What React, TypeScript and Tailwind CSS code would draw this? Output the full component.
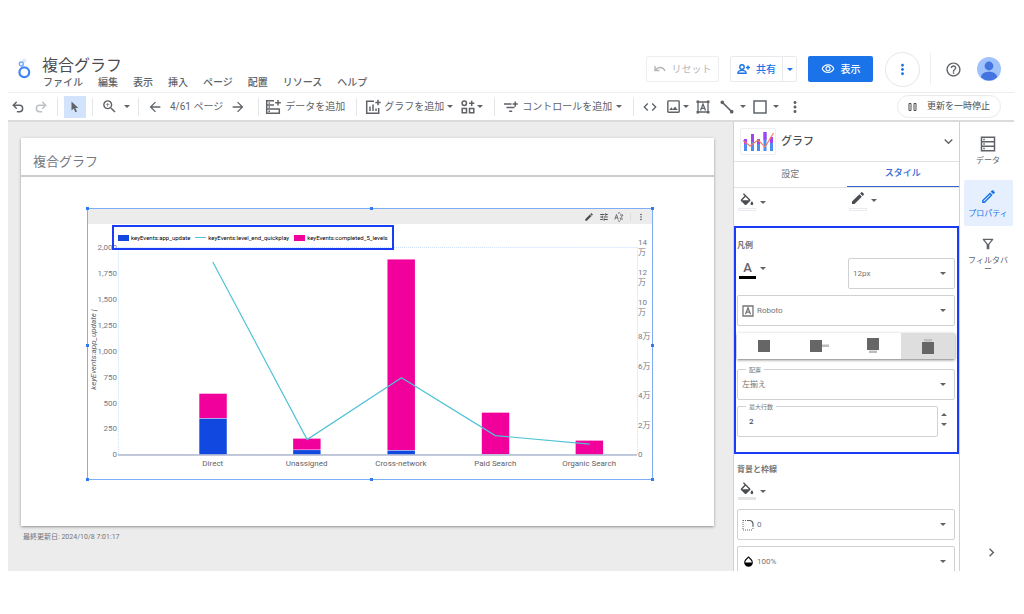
import React from 'react';
import { Undo2, Redo2 } from 'lucide-react';
import {
  MdZoomIn,
  MdArrowBack,
  MdArrowForward,
  MdCode,
  MdOutlineImage,
  MdMoreVert,
  MdHelpOutline,
  MdOutlineVisibility,
  MdEdit,
  MdOutlineEdit,
  MdTune,
  MdChevronRight,
  MdKeyboardArrowDown,
  MdOutlineFilterAlt,
  MdOpacity,
} from 'react-icons/md';

const menus = ['ファイル', '編集', '表示', '挿入', 'ページ', '配置', 'リソース', 'ヘルプ'];

const Caret: React.FC<{ className?: string }> = ({ className = 'fill-[#5f6368]' }) => (
  <svg viewBox="0 0 6 3" className={`h-[3px] w-[6px] shrink-0 ${className}`}>
    <path d="M0 0h6L3 3z" />
  </svg>
);

const Logo = () => (
  <svg viewBox="0 0 14 22" className="h-[22px] w-[14px] shrink-0" fill="none">
    <circle cx="6.300" cy="14.300" r="4.900" stroke="#4285f4" strokeWidth="2.200" />
    <circle cx="3.300" cy="6" r="2" stroke="#6ea2f8" strokeWidth="1.300" />
    <circle cx="6.300" cy="2.700" r="1.300" stroke="#bdd4fb" strokeWidth="1" />
  </svg>
);

const Avatar = () => (
  <svg viewBox="0 0 24 24" className="size-6">
    <circle cx="12" cy="12" r="12" fill="#a0c2fb" />
    <circle cx="12" cy="9" r="4.400" fill="#4374e0" />
    <path d="M4 20.500c0-4 4-5.700 8-5.700s8 1.700 8 5.700a12 12 0 0 1-16 0z" fill="#4374e0" />
  </svg>
);

const CursorIcon = () => (
  <svg viewBox="0 0 10 12" className="h-[12px] w-[10px] fill-[#5f6368]">
    <path d="M1.500.5v9l2.200-2 1.700 3.800 1.600-.7-1.700-3.700h3z" />
  </svg>
);

const PersonAddIcon = () => (
  <svg viewBox="0 0 14 12" className="h-3 w-[14px]" fill="none" stroke="currentColor" strokeWidth="1.400">
    <circle cx="5" cy="4" r="2.200" />
    <path d="M1 10.300v-.8c0-1.500 2.600-2.200 4-2.200s4 .7 4 2.200v.8zM11 2.500v4M9 4.500h4" />
  </svg>
);

const DataAddIcon = () => (
  <svg viewBox="0 0 16 16" className="size-4" fill="none" stroke="currentColor" strokeWidth="1.500">
    <path d="M9 1.700H1.700v12.600h12.600V9.500M1.700 6H9M1.700 10h12.600M3.500 4h1.500M3.500 8h1.500M3.500 12.200h1.500M13 1v5.500M10.200 3.700h5.600" />
  </svg>
);

const ChartAddIcon = () => (
  <svg viewBox="0 0 16 16" className="size-4" fill="none" stroke="currentColor" strokeWidth="1.500">
    <path d="M9 2.200H1.700v12h12V9M5 12V7.500M8 12V5.500M11 12V9.500M13 .8v5.400M10.300 3.500h5.400" />
  </svg>
);

const WidgetsIcon = () => (
  <svg viewBox="0 0 14 14" className="size-[14px]" fill="none" stroke="currentColor" strokeWidth="1.500">
    <circle cx="3.300" cy="3.300" r="2.200" />
    <path d="M1.200 8.500h4.300v4.300H1.200zM8.500 8.500h4.300v4.300H8.500zM10.700.7v5.200M8.100 3.300h5.200" />
  </svg>
);

const ControlIcon = () => (
  <svg viewBox="0 0 14 12" className="h-3 w-[14px]" fill="none" stroke="currentColor" strokeWidth="1.500">
    <path d="M0 3h7.500M2.500 6.500h8M5.200 10.300h3M11.200.5v5.200M8.600 3h5.200" />
  </svg>
);

const TextBoxIcon = () => (
  <svg viewBox="0 0 14 14" className="size-[14px]" fill="none" stroke="currentColor" strokeWidth="1.300">
    <path d="M2 2h10v10H2z" />
    <path d="M4.500 10.500 7 4l2.500 6.500M5.400 8.300h3.200" />
    <path d="M.5.5h2.600v2.600H.5zM10.900.5h2.600v2.600h-2.600zM.5 10.900h2.600v2.600H.5zM10.900 10.900h2.600v2.600h-2.600z" fill="currentColor" stroke="none" />
  </svg>
);

const LineIcon = () => (
  <svg viewBox="0 0 14 14" className="size-[14px]" fill="currentColor" stroke="currentColor" strokeWidth="1.700">
    <path d="M2 2l10 10" />
    <circle cx="2.300" cy="2.300" r="1" />
    <circle cx="11.700" cy="11.700" r="1" />
  </svg>
);

const FillIcon = () => (
  <svg viewBox="2 0 20 18" className="h-[13px] w-[14px] fill-[#4a4d51]">
    <path d="M16.560 8.940 7.620 0 6.210 1.410l2.380 2.380-5.150 5.150c-.59.59-.59 1.540 0 2.120l5.500 5.500c.29.29.68.44 1.060.44s.77-.15 1.060-.44l5.500-5.500c.59-.58.59-1.530 0-2.120zM5.210 10 10 5.210 14.790 10H5.210zM19 11.500s-2 2.170-2 3.500c0 1.100.9 2 2 2s2-.9 2-2c0-1.330-2-3.500-2-3.500z" />
  </svg>
);

const ComboChartIcon = () => (
  <svg viewBox="0 0 32 22" className="h-[22px] w-8" fill="none">
    <path d="M3.500 8v12M10.500 3v17M16.500 8v12M23 1v19M29.500 6v14" stroke="#4d8bf5" strokeWidth="3" />
    <path d="M3.500 8v5M10.500 3v8M16.500 8v5M23 1v8M29.500 6v6" stroke="#a142f4" strokeWidth="3" />
    <path d="M1 9.500 8 15l8-6 7 7L31.500 2" stroke="#fa7b5f" strokeWidth="1.200" />
  </svg>
);

const DataRailIcon = () => (
  <svg viewBox="0 0 16 16" className="size-4" fill="none" stroke="currentColor" strokeWidth="1.500">
    <path d="M1.500 1.200h13v13.600h-13zM1.500 5.700h13M1.500 10.200h13M3.300 3.500h1.500M3.300 8h1.500M3.300 12.500h1.500" />
  </svg>
);

const CornerIcon = () => (
  <svg viewBox="0 0 12 12" className="size-3" fill="none" stroke="#5f6368">
    <path d="M1 1.500h5M1 1v10M1 11h10M11 7v4" strokeDasharray="1 1" />
    <path d="M5 1.500h2.500a3.500 3.500 0 0 1 3.500 3.500v2" strokeWidth="1.200" />
  </svg>
);

const FontIcon = () => (
  <svg viewBox="0 0 12 12" className="size-3" fill="none" stroke="#757575" strokeWidth="1.300">
    <path d="M1 1h10v10H1z" />
    <path d="M3.500 9.200 6 2.800l2.500 6.400M4.300 7.200h3.400" />
  </svg>
);

const SortIcon = () => (
  <svg viewBox="0 0 10 10" className="size-[10px]" fill="none" stroke="#5f6368">
    <path d="M.8 7.500 2.500 2.500l1.700 5M1.400 5.800h2.300M6 3h3L6 7h3M4 1.500 5.200.5l1.200 1M4 8.500l1.200 1 1.200-1" strokeWidth=".9" />
  </svg>
);

const ToolGroup: React.FC<{ className?: string; children: React.ReactNode }> = ({ className = '', children }) => (
  <div className={`flex h-[18px] shrink-0 items-center border-r border-[#e4e6e8] ${className}`}>{children}</div>
);

const ToolButton: React.FC<{ label: string; className?: string; children: React.ReactNode }> = ({
  label,
  className = '',
  children,
}) => (
  <button type="button" aria-label={label} className={`flex shrink-0 items-center whitespace-nowrap ${className}`}>
    {children}
  </button>
);

const Header = () => (
  <header className="flex h-[46px] shrink-0 items-center pr-[13px]">
    <div className="flex flex-1 items-center gap-[10px] pl-[10px]">
      <Logo />
      <div className="pt-[9px]">
        <h1 className="text-base leading-[18px] text-[#4a4d51]">複合グラフ</h1>
        <nav className="flex gap-[15px] pl-px text-[10px] leading-4 font-medium text-[#5f6368]">
          {menus.map(menu => (
            <button key={menu} type="button">
              {menu}
            </button>
          ))}
        </nav>
      </div>
    </div>

    <button
      type="button"
      disabled
      className="mr-[11px] flex h-[26px] w-[73px] items-center justify-center gap-[6px] rounded-xs border border-[#eeeeee] text-[10px] text-[#b4b6b9]"
    >
      <svg viewBox="0 0 12 8" className="h-2 w-3" fill="none" stroke="currentColor" strokeWidth="1.400">
        <path d="M1 1v4.500h4.500M1.500 5C4 1.500 9 1.500 11 6" />
      </svg>
      リセット
    </button>
    <div className="mr-[11px] flex h-[26px] w-[67px] rounded-xs border border-[#e8eaed] text-[#1a73e8]">
      <button type="button" className="flex flex-1 items-center justify-center gap-[5px] text-[10px] font-medium">
        <PersonAddIcon />
        共有
      </button>
      <button
        type="button"
        aria-label="共有オプション"
        className="flex w-[14px] items-center justify-center border-l border-[#e8eaed]"
      >
        <Caret className="fill-[#1a73e8]" />
      </button>
    </div>
    <button
      type="button"
      className="mr-3 flex h-[26px] w-[65px] items-center justify-center gap-[6px] rounded-xs bg-[#1a73e8] text-[10px] font-medium text-white"
    >
      <MdOutlineVisibility size={14} />
      表示
    </button>
    <button
      type="button"
      aria-label="その他"
      className="mr-[10px] flex size-[35px] items-center justify-center rounded-full border border-[#e4e6e8] text-[#1a73e8]"
    >
      <MdMoreVert size={17} />
    </button>
    <div className="mr-[14px] h-8 border-l border-[#eceef0]" />
    <button type="button" aria-label="ヘルプを表示" className="mr-[15px] text-[#5f6368]">
      <MdHelpOutline size={17} />
    </button>
    <button type="button" aria-label="アカウント">
      <Avatar />
    </button>
  </header>
);

const Toolbar = () => (
  <div className="flex h-[30px] shrink-0 items-center border-t border-b-2 border-t-[#eceef0] border-b-[#d9dbdd] pr-[13px] text-[10px] text-[#5f6368]">
    <ToolGroup className="gap-[9px] pr-[9px] pl-[3px]">
      <ToolButton label="元に戻す">
        <Undo2 size={14} strokeWidth={2.500} />
      </ToolButton>
      <ToolButton label="やり直す" className="text-[#bdc1c6]">
        <Redo2 size={14} strokeWidth={2.500} />
      </ToolButton>
    </ToolGroup>
    <ToolGroup className="px-[6px]">
      <ToolButton label="選択" className="h-[22px] w-[22px] justify-center bg-[#d2e3fc]">
        <CursorIcon />
      </ToolButton>
    </ToolGroup>
    <ToolGroup className="px-2">
      <ToolButton label="ズーム" className="gap-[6px]">
        <MdZoomIn size={17} />
        <Caret />
      </ToolButton>
    </ToolGroup>
    <ToolGroup className="gap-[7px] pr-3 pl-2">
      <ToolButton label="前のページ">
        <MdArrowBack size={16} />
      </ToolButton>
      <span className="whitespace-nowrap">4/61 ページ</span>
      <ToolButton label="次のページ">
        <MdArrowForward size={16} />
      </ToolButton>
    </ToolGroup>
    <ToolGroup className="pr-[11px] pl-[6px]">
      <ToolButton label="データを追加" className="gap-1">
        <DataAddIcon />
        データを追加
      </ToolButton>
    </ToolGroup>
    <ToolGroup className="gap-2 pr-[11px] pl-2">
      <ToolButton label="グラフを追加" className="gap-[3px]">
        <ChartAddIcon />
        グラフを追加
        <Caret />
      </ToolButton>
      <ToolButton label="コミュニティ ビジュアライゼーション" className="gap-[2px]">
        <WidgetsIcon />
        <Caret />
      </ToolButton>
    </ToolGroup>
    <ToolGroup className="pr-[11px] pl-[9px]">
      <ToolButton label="コントロールを追加" className="gap-1">
        <ControlIcon />
        コントロールを追加
        <Caret />
      </ToolButton>
    </ToolGroup>
    <div className="flex items-center gap-[7px] pl-2">
      <ToolButton label="URL を埋め込む">
        <MdCode size={16} />
      </ToolButton>
      <ToolButton label="画像" className="gap-px">
        <MdOutlineImage size={17} />
        <Caret />
      </ToolButton>
      <ToolButton label="テキスト">
        <TextBoxIcon />
      </ToolButton>
      <ToolButton label="線" className="gap-[6px] pl-[3px]">
        <LineIcon />
        <Caret />
      </ToolButton>
      <ToolButton label="図形" className="gap-[6px]">
        <svg viewBox="0 0 14 14" className="size-[14px]" fill="none" stroke="currentColor" strokeWidth="1.500">
          <path d="M1 1h12v12H1z" />
        </svg>
        <Caret />
      </ToolButton>
      <ToolButton label="その他のツール">
        <MdMoreVert size={18} />
      </ToolButton>
    </div>
    <button
      type="button"
      className="ml-auto flex h-[23px] w-[104px] items-center justify-center gap-[10px] rounded-full border border-[#e8eaed] text-[9px] whitespace-nowrap text-[#4a4d51]"
    >
      <svg viewBox="0 0 9 8" className="h-2 w-[9px]" fill="none" stroke="currentColor">
        <path d="M1 .5h2v7H1zM6 .5h2v7H6z" />
      </svg>
      更新を一時停止
    </button>
  </div>
);

const leftTicks = ['2,000', '1,750', '1,500', '1,250', '1,000', '750', '500', '250', '0'];
const rightTicks = ['14万', '12万', '10万', '8万', '6万', '4万', '2万', '0'];
const bars = [
  { name: 'Direct', x: 125, top: 170, split: 194.500 },
  { name: 'Unassigned', x: 219, top: 215, split: 226 },
  { name: 'Cross-network', x: 313.500, top: 35.500, split: 226.500 },
  { name: 'Paid Search', x: 408, top: 189, split: 230.500 },
  { name: 'Organic Search', x: 502, top: 217, split: 231 },
];

// Plot area: x 30-550, y 24-231, zero line at y 231
const ComboChart = () => (
  <svg viewBox="0 0 565 255" className="block w-full font-['Roboto','Noto_Sans_CJK_JP',sans-serif]">
    <rect x="30.500" y="23.500" width="520" height="207.500" fill="none" stroke="#c9dcfa" strokeDasharray="1 1" />
    {leftTicks.map((tick, i) => (
      <text key={tick} x="29" y={26.500 + i * 25.900} textAnchor="end" fontSize="8" fill="#757984">
        {tick}
      </text>
    ))}
    {rightTicks.map((tick, i) => {
      const y = 26.500 + i * 29.600;
      return tick.length === 3 ? (
        <text key={tick} fontSize="8" fill="#757984">
          <tspan x="551" y={y - 5}>{tick.slice(0, 2)}</tspan>
          <tspan x="551" y={y + 5}>{tick.slice(2)}</tspan>
        </text>
      ) : (
        <text key={tick} x="551" y={y} fontSize="8" fill="#757984">
          {tick}
        </text>
      );
    })}
    <text transform="translate(8 166) rotate(-90)" fontSize="8" fontStyle="italic" fill="#5f6368">
      keyEvents:app_update |
    </text>
    {bars.map(bar => (
      <g key={bar.name}>
        <rect x={bar.x - 13.500} y={bar.top} width="27.500" height={bar.split - bar.top} fill="#f2009b" />
        <rect x={bar.x - 13.500} y={bar.split + 0.500} width="27.500" height={Math.max(0, 230.500 - bar.split)} fill="#1149e0" />
        <text x={bar.x} y="242.500" textAnchor="middle" fontSize="8" fill="#5f6368">
          {bar.name}
        </text>
      </g>
    ))}
    <path d="M30 231.500h520" stroke="#b0b9cf" strokeWidth="1.500" />
    <path d="M125 38 219.500 216 314 154 408 212 502.500 220.500" fill="none" stroke="#4fc3d4" strokeWidth="1.200" />
  </svg>
);

const Legend = () => (
  <div className="absolute top-4 left-6 flex h-[25px] items-center gap-[5px] border-2 border-[#1a3cf5] px-[4px] font-['Roboto',sans-serif] text-[6px] whitespace-nowrap text-black">
    <span className="flex items-center gap-[2px]">
      <i className="h-[6px] w-[11px] bg-[#1149e0]" />
      keyEvents:app_update
    </span>
    <span className="flex items-center gap-[2px]">
      <i className="h-px w-[11px] bg-[#4fc3d4]" />
      keyEvents:level_end_quickplay
    </span>
    <span className="flex items-center gap-[2px]">
      <i className="h-[6px] w-[11px] bg-[#f2009b]" />
      keyEvents:completed_5_levels
    </span>
  </div>
);

const handles = [
  '-top-[2px] -left-[2px]',
  '-top-[2px] left-1/2',
  '-top-[2px] -right-[2px]',
  'top-1/2 -left-[2px]',
  'top-1/2 -right-[2px]',
  '-bottom-[2px] -left-[2px]',
  '-bottom-[2px] left-1/2',
  '-bottom-[2px] -right-[2px]',
];

const Canvas = () => (
  <main className="flex-1 overflow-hidden bg-[#ececec] pt-4 pr-[19px] pl-[13px]">
    <section className="bg-white pb-[46px] shadow-sm shadow-black/30">
      <h2 className="border-b-2 border-[#cccccc] pt-[10px] pl-3 text-[13px] leading-[27px] text-[#757984]">複合グラフ</h2>
      <div className="relative mt-[31px] mr-[61px] ml-[66px] border border-[#7fadf5]">
        <div className="flex h-[15px] items-center justify-end gap-[5px] bg-[#ececec] pr-[6px] text-[#4a4d51]">
          <MdEdit size={10} />
          <MdTune size={10} />
          <SortIcon />
          <div className="ml-px h-2 border-l border-[#dadce0]" />
          <MdMoreVert size={10} />
        </div>
        <ComboChart />
        <Legend />
        {handles.map(position => (
          <div key={position} className={`absolute size-[3px] bg-[#2f7af0] ${position}`} />
        ))}
      </div>
    </section>
    <p className="pt-[5px] pl-[2px] text-[7px] leading-3 text-[#757575]">最終更新日: 2024/10/8 7:01:17</p>
  </main>
);

interface FieldProps {
  label: string;
  value: string;
  icon?: React.ReactNode;
  floating?: boolean;
  className?: string;
}

const SelectField: React.FC<FieldProps> = ({ label, value, icon, floating = false, className = '' }) => (
  <label className={`relative flex h-[31px] shrink-0 items-center rounded-xs border border-[#cfd1d3] ${className}`}>
    {floating && (
      <span className="absolute -top-[5px] left-[8px] bg-white px-[3px] text-[6px] leading-[10px] text-[#757575]">{label}</span>
    )}
    {icon && <span className="absolute left-1">{icon}</span>}
    <select
      aria-label={label}
      className={`size-full appearance-none bg-transparent text-[8px] text-[#757575] outline-none ${icon ? 'pl-[19px]' : 'pl-1'}`}
    >
      <option>{value}</option>
    </select>
    <Caret className="pointer-events-none absolute right-2 fill-[#5f6368]" />
  </label>
);

const ColorButton: React.FC<{ label: string; swatch: string; children: React.ReactNode }> = ({
  label,
  swatch,
  children,
}) => (
  <button type="button" aria-label={label} className="flex items-center gap-1">
    <span className="flex w-[18px] flex-col items-center gap-[2px]">
      {children}
      <span className={`h-[3px] w-full ${swatch}`} />
    </span>
    <Caret />
  </button>
);

const legendPositions = [
  { label: 'なし', d: 'M6 5h12v12H6z', accent: '' },
  { label: '右', d: 'M3 5h12v12H3z', accent: 'M15 9.500h7v2.500h-7z' },
  { label: '下', d: 'M6 3h12v12H6z', accent: 'M8 15.500h8v2.500H8z' },
  { label: '上', d: 'M6 7h12v12H6z', accent: 'M8 4h8v2.500H8z' },
];

const PropertyPanel = () => (
  <aside className="flex w-[227px] shrink-0 flex-col overflow-hidden border-x border-[#d0d2d4] bg-white">
    <div className="flex h-[40px] shrink-0 items-center border-b border-[#e0e2e4] pr-[2px] pl-[6px]">
      <span className="flex h-[27px] w-9 items-center justify-center rounded-xs border border-[#eceef0]">
        <ComboChartIcon />
      </span>
      <h2 className="flex-1 pt-px pl-[5px] text-[11px] font-medium text-[#4a4d51]">グラフ</h2>
      <button type="button" aria-label="折りたたむ" className="text-[#5f6368]">
        <MdKeyboardArrowDown size={17} />
      </button>
    </div>
    <div role="tablist" className="flex h-[26px] shrink-0 border-b border-[#e0e2e4] text-[9px]">
      <button type="button" role="tab" aria-selected="false" className="flex-1 text-[#757575]">
        設定
      </button>
      <button type="button" role="tab" aria-selected="true" className="flex-1 border-b border-[#3367d6] font-medium text-[#3367d6]">
        スタイル
      </button>
    </div>
    <div className="grid h-[38px] shrink-0 grid-cols-2 items-end pb-[15px] pl-1">
      <ColorButton label="塗りつぶし" swatch="border border-[#e8eaed] bg-white">
        <FillIcon />
      </ColorButton>
      <ColorButton label="線の色" swatch="border border-[#e8eaed] bg-white">
        <MdEdit size={16} className="text-[#4a4d51]" />
      </ColorButton>
    </div>

    <section className="flex shrink-0 flex-col border-2 border-[#1a3cf5] pt-[10px] pr-[2px] pb-[15px] pl-px">
      <h3 className="text-[8px] leading-4 font-bold text-[#757575]">凡例</h3>
      <div className="mt-1 flex items-start justify-between">
        <button type="button" aria-label="文字色" className="flex items-center gap-1 pl-[2px]">
          <span className="flex w-[17px] flex-col items-center border-b-[3px] border-black pt-[2px] font-['Roboto',sans-serif] text-[13px] leading-4 font-medium text-[#5f6368]">
            A
          </span>
          <Caret />
        </button>
        <SelectField label="フォントサイズ" value="12px" className="w-[107px]" />
      </div>
      <SelectField label="フォント" value="Roboto" icon={<FontIcon />} className="mt-[6px]" />
      <div className="mt-[7px] grid h-[26px] grid-cols-4 shadow-sm shadow-black/40">
        {legendPositions.map(({ label, d, accent }) => (
          <button
            key={label}
            type="button"
            aria-label={label}
            className={`flex items-center justify-center ${label === '上' ? 'bg-[#dedede]' : 'bg-white'}`}
          >
            <svg viewBox="0 0 24 22" className="h-[22px] w-6">
              <path d={d} fill="#666666" />
              <path d={accent} fill="#bdbdbd" />
            </svg>
          </button>
        ))}
      </div>
      <SelectField label="配置" value="左揃え" floating className="mt-[10px]" />
      <div className="mt-[6px] flex items-center gap-[3px]">
        <label className="relative flex h-[31px] flex-1 items-center rounded-xs border border-[#cfd1d3]">
          <span className="absolute -top-[5px] left-[8px] bg-white px-[3px] text-[6px] leading-[10px] text-[#757575]">
            最大行数
          </span>
          <input type="text" defaultValue="2" className="w-full pl-[11px] text-[8px] font-medium text-[#4a4d51] outline-none" />
        </label>
        <div className="flex w-[14px] flex-col items-start gap-[7px] pb-1">
          <button type="button" aria-label="増やす" className="flex">
            <Caret className="rotate-180 fill-[#5f6368]" />
          </button>
          <button type="button" aria-label="減らす" className="flex">
            <Caret />
          </button>
        </div>
      </div>
    </section>

    <section className="flex shrink-0 flex-col pt-2 pr-1 pl-[3px]">
      <h3 className="text-[8px] leading-4 font-bold text-[#757575]">背景と枠線</h3>
      <div className="mt-1 pl-px">
        <ColorButton label="背景色" swatch="bg-[#e4e4e4]">
          <FillIcon />
        </ColorButton>
      </div>
      <SelectField label="枠線の半径" value="0" icon={<CornerIcon />} className="mt-[9px]" />
      <SelectField label="不透明度" value="100%" icon={<MdOpacity size={13} className="text-black" />} className="mt-[6px]" />
    </section>
  </aside>
);

const railButton = 'flex h-[46px] w-[49px] flex-col items-center pt-2 text-[8px] leading-[9px]';

const SideRail = () => (
  <nav className="flex w-[54px] shrink-0 flex-col items-center gap-[2px] bg-white pt-[6px] pl-[2px] text-[#5f6368]">
    <button type="button" className={`${railButton} mb-1 gap-1`}>
      <DataRailIcon />
      データ
    </button>
    <button type="button" className={`${railButton} gap-1 rounded-xs bg-[#e6effd] text-[#1a73e8]`}>
      <MdOutlineEdit size={17} />
      プロパティ
    </button>
    <button type="button" className={`${railButton} gap-1`}>
      <MdOutlineFilterAlt size={18} />
      <span>
        フィルタバ
        <br />ー
      </span>
    </button>
    <button type="button" aria-label="パネルを閉じる" className="mt-auto mb-[10px] ml-[7px]">
      <MdChevronRight size={17} />
    </button>
  </nav>
);

const App = () => (
  <div className="flex h-screen flex-col bg-white pt-[46px] pr-[10px] pb-[43px] pl-2 font-['Roboto','Noto_Sans_CJK_JP',sans-serif]">
    <Header />
    <Toolbar />
    <div className="flex min-h-0 flex-1">
      <Canvas />
      <PropertyPanel />
      <SideRail />
    </div>
  </div>
);

export default App;
